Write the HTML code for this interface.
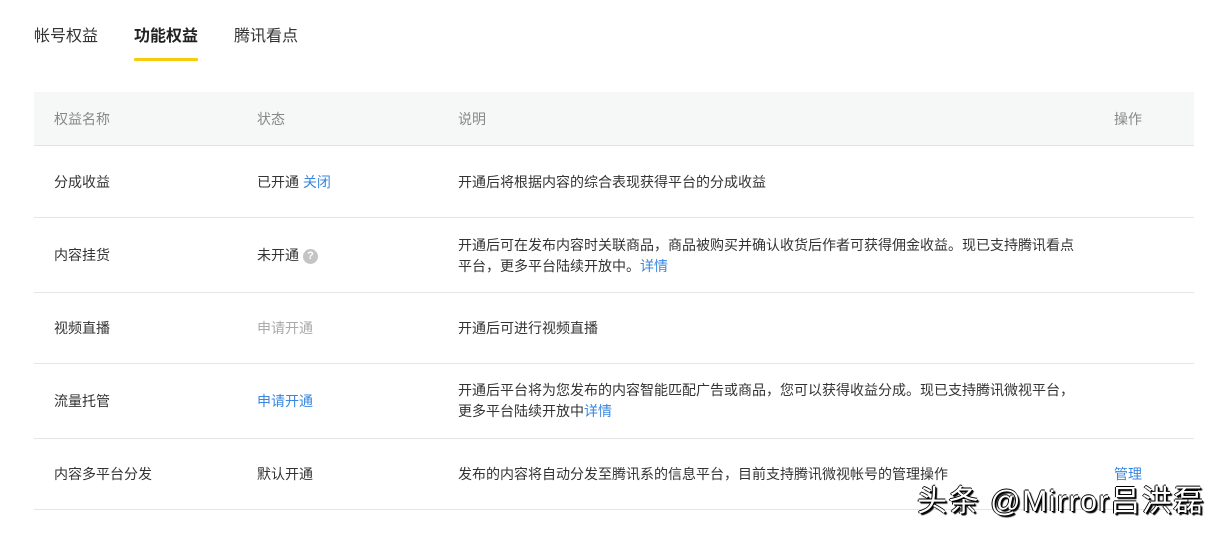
<!DOCTYPE html>
<html><head><meta charset="utf-8"><style>
*{margin:0;padding:0;box-sizing:border-box}
body{width:1224px;height:536px;background:#fff;font-family:"Liberation Sans","Noto Sans CJK SC",sans-serif;color:#333;font-size:14px;position:relative;overflow:hidden}
.tab{position:absolute;top:26px;font-size:16px;color:#333;line-height:22px}
.tab.on{font-weight:bold;color:#222}
.ul{position:absolute;left:134px;top:58px;width:64px;height:3px;background:#f8cb0b;border-radius:1px}
.hd{position:absolute;left:34px;top:92px;width:1160px;height:54px;background:#f6f7f7;border-bottom:1px solid #e3e3e3}
.hd span{position:absolute;top:18px;color:#888;font-size:14px;line-height:18px}
.line{position:absolute;left:34px;width:1160px;height:1px;background:#e5e5e5}
.t{position:absolute;line-height:20px;white-space:nowrap}
.b{color:#3a86e0}
.g{color:#aaa}
.q{display:inline-block;width:15px;height:15px;border-radius:50%;background:#c4c4c4;color:#fff;font-size:11px;line-height:15px;text-align:center;font-weight:bold;vertical-align:1px;margin-left:4px}
.wm{position:absolute;left:917px;top:484px;font-size:30px;line-height:36px;letter-spacing:1.6px;color:#fff;white-space:nowrap;text-shadow:1px 1px 0 #000,-1px 0 0 #000,0 -1px 0 #000,2px 2px 1px #000;font-family:"Liberation Sans","Noto Sans CJK SC",sans-serif}
</style></head><body>
<div class="tab" style="left:34px">帐号权益</div>
<div class="tab on" style="left:134px">功能权益</div>
<div class="tab" style="left:234px">腾讯看点</div>
<div class="ul"></div>
<div class="hd"><span style="left:20px">权益名称</span><span style="left:223px">状态</span><span style="left:424px">说明</span><span style="left:1080px">操作</span></div>

<div class="t" style="left:54px;top:172px">分成收益</div>
<div class="t" style="left:257px;top:172px">已开通 <span class="b">关闭</span></div>
<div class="t" style="left:458px;top:172px">开通后将根据内容的综合表现获得平台的分成收益</div>
<div class="line" style="top:217px"></div>

<div class="t" style="left:54px;top:245px">内容挂货</div>
<div class="t" style="left:257px;top:245px">未开通<span class="q">?</span></div>
<div class="t" style="left:458px;top:235px;line-height:21px">开通后可在发布内容时关联商品，商品被购买并确认收货后作者可获得佣金收益。现已支持腾讯看点<br>平台，更多平台陆续开放中。<span class="b">详情</span></div>
<div class="line" style="top:292px"></div>

<div class="t" style="left:54px;top:318px">视频直播</div>
<div class="t g" style="left:257px;top:318px">申请开通</div>
<div class="t" style="left:458px;top:318px">开通后可进行视频直播</div>
<div class="line" style="top:363px"></div>

<div class="t" style="left:54px;top:391px">流量托管</div>
<div class="t b" style="left:257px;top:391px">申请开通</div>
<div class="t" style="left:458px;top:380px;line-height:21px">开通后平台将为您发布的内容智能匹配广告或商品，您可以获得收益分成。现已支持腾讯微视平台，<br>更多平台陆续开放中<span class="b">详情</span></div>
<div class="line" style="top:438px"></div>

<div class="t" style="left:54px;top:464px">内容多平台分发</div>
<div class="t" style="left:257px;top:464px">默认开通</div>
<div class="t" style="left:458px;top:464px">发布的内容将自动分发至腾讯系的信息平台，目前支持腾讯微视帐号的管理操作</div>
<div class="t b" style="left:1114px;top:464px">管理</div>
<div class="line" style="top:509px"></div>
<div class="wm">头条 @Mirror吕洪磊</div>
</body></html>
